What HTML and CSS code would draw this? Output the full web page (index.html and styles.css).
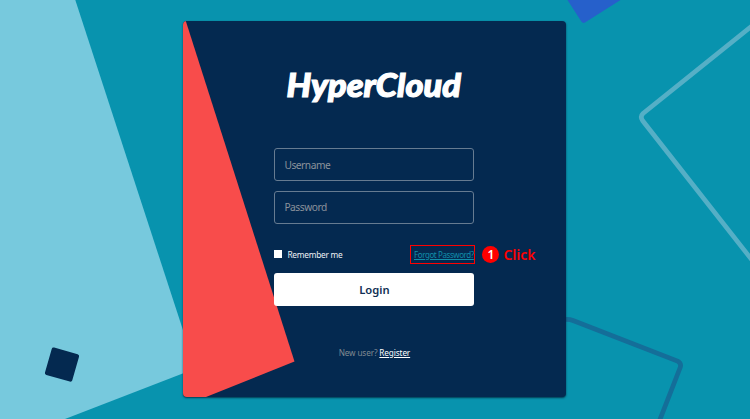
FILE: index.html
```html
<!DOCTYPE html>
<html lang="en">
<head>
<meta charset="utf-8">
<title>HyperCloud</title>
<link rel="stylesheet" href="styles.css">
</head>
<body>
<svg class="backdrop" viewBox="0 0 750 419" aria-hidden="true">
  <path d="M0 0H75.3L189 348.5L184 373L65 419H0Z" fill="#77c9dd"/>
  <rect x="-14.2" y="-14.2" width="28.4" height="28.4" rx="2" transform="translate(62 364.6) rotate(16)" fill="#042950"/>
  <path d="M567.5 0L581.5 21.8Q583 23.6 585 22.4L620.5 0Z" fill="#2660cb"/>
  <path d="M752 26L643 113.500Q639.800 116.500 642.500 120.500L752 260" fill="none" stroke="#55afc6" stroke-width="4.700"/>
  <path d="M562 320Q568 318.500 573 320.500L677.500 361Q681.700 363.500 680.200 367.500L659 422" fill="none" stroke="#146e99" stroke-width="4.700"/>
</svg>
<main class="card">
  <svg class="accent" viewBox="0 0 383 376" aria-hidden="true"><path d="M0 0H2.800L111.500 340.500L23 376H0Z" fill="#f84c4b"/></svg>
  <form class="login">
    <svg class="logo" viewBox="0 0 200 44" role="img" aria-label="HyperCloud"><text x="12.500" y="31.500" textLength="174.500" lengthAdjust="spacingAndGlyphs">HyperCloud</text></svg>
    <input class="field" type="text" placeholder="Username">
    <input class="field" type="password" placeholder="Password">
    <div class="options">
      <label class="remember"><span class="check"></span>Remember me</label>
      <div class="highlight"><a class="forgot" href="#">Forgot Password?</a></div>
      <div class="note"><span class="badge">1</span><span>Click</span></div>
    </div>
    <button class="submit" type="button">Login</button>
    <p class="signup">New user? <a href="#">Register</a></p>
  </form>
</main>
</body>
</html>
```
FILE: styles.css
```css
* { box-sizing: border-box; }
body {
  margin: 0;
  height: 419px;
  overflow: hidden;
  background: #0893ae;
  font-family: "Noto Sans", sans-serif;
}
.backdrop { position: absolute; inset: 0; width: 750px; height: 419px; }
.card {
  position: relative;
  width: 383px;
  height: 376px;
  margin: 21px 0 0 183px;
  border-radius: 4px;
  background: #042950;
  box-shadow: 0 1px 2px rgba(0, 25, 45, .75);
}
.accent { position: absolute; inset: 0; width: 383px; height: 376px; border-radius: 4px; }
.login {
  position: relative;
  display: flex;
  flex-direction: column;
  width: 200px;
  margin-left: 91.4px;
  padding-top: 44px;
}
.logo { display: block; width: 200px; height: 44px; margin-bottom: 39.4px; overflow: visible; }
.logo text {
  font: italic 900 33px Lato, sans-serif;
  fill: #fff;
  stroke: #fff;
  stroke-width: 1.2px;
}
.field {
  width: 200px;
  height: 33px;
  margin: 0 0 9.5px;
  padding: 0 9px;
  border: 1px solid #667b91;
  border-radius: 3px;
  background: transparent;
  color: #fff;
  font: 10.2px "Noto Sans", sans-serif;
  letter-spacing: -.45px;
}
.field::placeholder { color: #8b929b; opacity: 1; }
.options {
  position: relative;
  display: flex;
  align-items: center;
  justify-content: space-between;
  height: 19px;
  margin: 11.5px 0 9px;
}
.remember {
  display: flex;
  align-items: center;
  gap: 5px;
  color: #eef2f5;
  font-size: 8.3px;
  letter-spacing: -.25px;
}
.check { width: 8px; height: 8px; background: #fff; }
.highlight {
  width: 65px;
  height: 19px;
  margin-right: -.6px;
  padding-left: 3px;
  border: 1px solid #ff0000;
  font-size: 8px;
  line-height: 17px;
}
.forgot {
  color: #118daa;
  letter-spacing: -.42px;
  white-space: nowrap;
}
.note {
  position: absolute;
  left: 208px;
  top: 0;
  display: flex;
  align-items: center;
  gap: 4px;
  height: 19px;
  color: #f00;
  font-size: 14px;
  font-weight: 600;
}
.badge {
  width: 17px;
  height: 17px;
  border-radius: 50%;
  background: #f00;
  color: #fff;
  font-size: 12px;
  line-height: 17px;
  text-align: center;
}
.submit {
  height: 33px;
  padding: 0;
  border: 0;
  border-radius: 3px;
  background: #fff;
  color: #102f54;
  font: 600 11.2px "Noto Sans", sans-serif;
}
.signup {
  margin: 41px 0 0;
  color: #818991;
  font-size: 8.2px;
  line-height: 12px;
  letter-spacing: -.12px;
  text-align: center;
}
.signup a { color: #fff; }
```
